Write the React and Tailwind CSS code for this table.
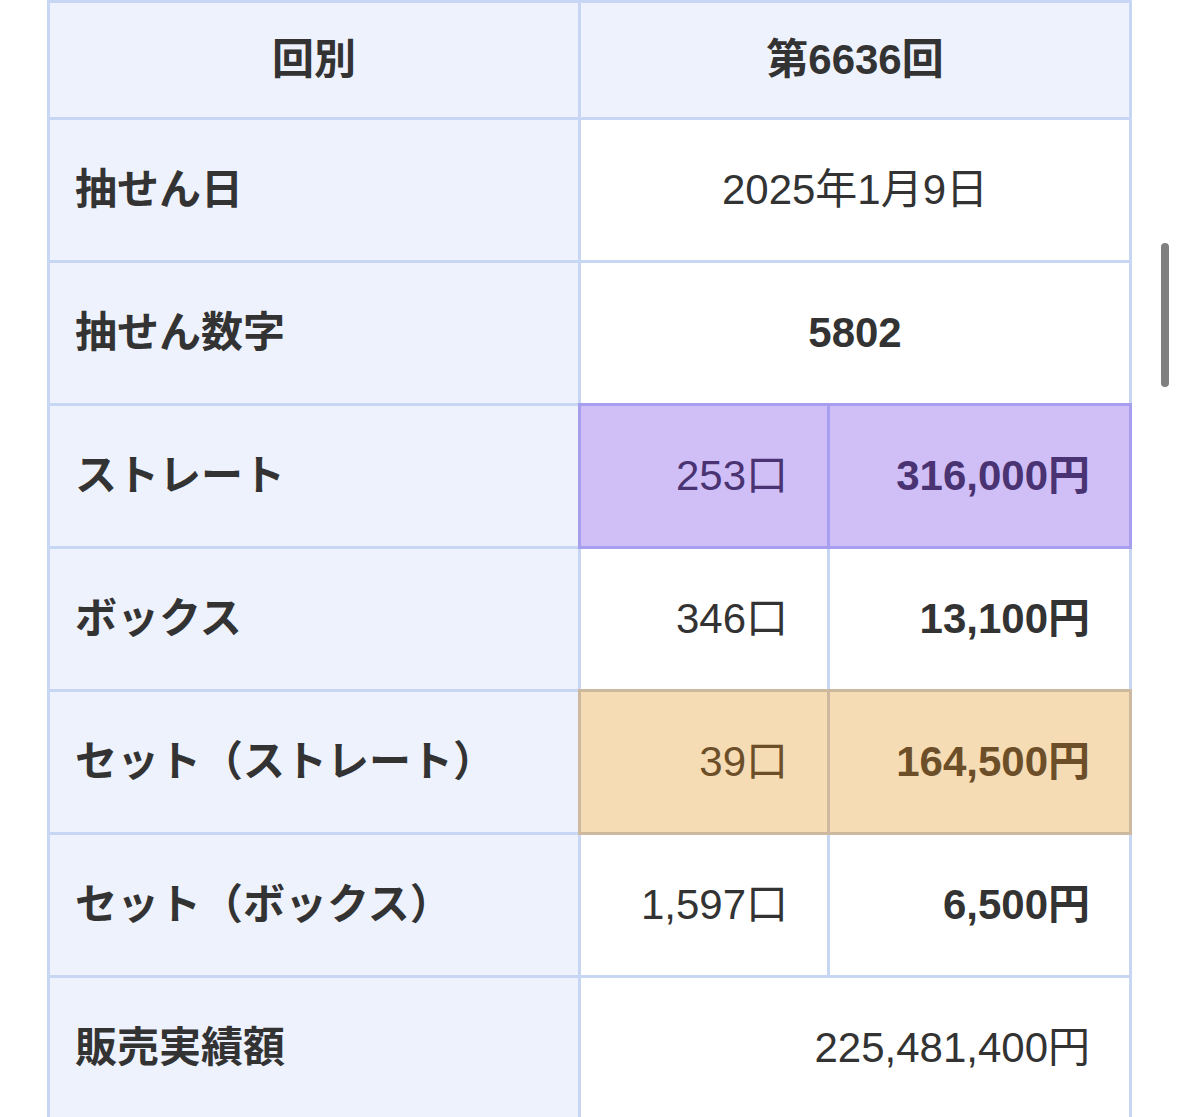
const rows = [
  { label: "抽せん数字", value: "5802", bold: true },
  { label: "ストレート", count: "253口", amount: "316,000円", tone: "purple" },
  { label: "ボックス", count: "346口", amount: "13,100円" },
  { label: "セット（ストレート）", count: "39口", amount: "164,500円", tone: "orange" },
  { label: "セット（ボックス）", count: "1,597口", amount: "6,500円" },
];

const tones = {
  purple: "bg-[#d0bff6] text-[#4a3372] outline-3 outline-[#a89ef0] z-10",
  orange: "bg-[#f5dcb5] text-[#6c4f29] outline-3 outline-[#cdb8a0] z-10",
  plain: "bg-white text-[#333333]",
};

function Label({ children, center }) {
  return (
    <div
      className={`bg-[#eef2fd] flex items-center font-bold text-[#333333] ${
        center ? "justify-center" : "pl-[25px]"
      }`}
    >
      {children}
    </div>
  );
}

export default function App() {
  return (
    <div
      className="relative min-h-[1117px] bg-white overflow-hidden"
      style={{ fontFamily: '"Liberation Sans", "Noto Sans CJK JP", sans-serif' }}
    >
      <div className="ml-[47px] w-[1085px] bg-[#c6d6f3] p-[3px] grid grid-cols-[528px_246px_299px] auto-rows-[140px] [grid-template-rows:114px] gap-[3px] text-[42px] leading-none">
        <Label center>回別</Label>
        <div className="col-span-2 bg-[#eef2fd] flex items-center justify-center font-bold text-[#333333]">
          第6636回
        </div>

        <Label>抽せん日</Label>
        <div className="col-span-2 bg-white flex items-center justify-center text-[#333333]">
          2025年1月9日
        </div>

        {rows.map((r) =>
          r.value ? (
            [
              <Label key={r.label + "l"}>{r.label}</Label>,
              <div
                key={r.label + "v"}
                className="col-span-2 bg-white flex items-center justify-center font-bold text-[#333333]"
              >
                {r.value}
              </div>,
            ]
          ) : (
            [
              <Label key={r.label + "l"}>{r.label}</Label>,
              <div
                key={r.label + "c"}
                className={`relative flex items-center justify-end pr-[39px] ${tones[r.tone || "plain"]}`}
              >
                {r.count}
              </div>,
              <div
                key={r.label + "a"}
                className={`relative flex items-center justify-end pr-[39px] font-bold ${tones[r.tone || "plain"]}`}
              >
                {r.amount}
              </div>,
            ]
          )
        )}

        <Label>販売実績額</Label>
        <div className="col-span-2 bg-white flex items-center justify-end pr-[39px] text-[#333333]">
          225,481,400円
        </div>
      </div>

      <div className="absolute left-[1161px] top-[243px] w-[8px] h-[144px] rounded-full bg-[#808080]" />
    </div>
  );
}
